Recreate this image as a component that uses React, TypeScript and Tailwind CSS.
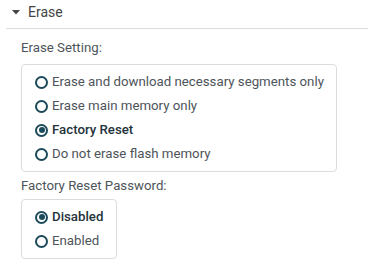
import React from 'react'

type Opt = { label: string; checked?: boolean }

function Radio({ label, checked }: Opt) {
    return (
        <div className="flex h-[24px] items-center gap-[4px] whitespace-nowrap">
            <span className="flex h-[13px] w-[13px] shrink-0 items-center justify-center rounded-full border-2 border-[#1b4a5a]">
                {checked && <span className="h-[6px] w-[6px] rounded-full bg-[#1b4a5a]" />}
            </span>
            <span className={checked ? 'font-medium text-[#24333b]' : 'text-[#4d5459]'}>{label}</span>
        </div>
    )
}

export default function App() {
    const erase: Opt[] = [
        { label: 'Erase and download necessary segments only' },
        { label: 'Erase main memory only' },
        { label: 'Factory Reset', checked: true },
        { label: 'Do not erase flash memory' },
    ]
    const pwd: Opt[] = [{ label: 'Disabled', checked: true }, { label: 'Enabled' }]

    return (
        <div className="h-[268px] w-[368px] bg-white text-[13.25px] text-[#4d5459]" style={{ fontFamily: 'Roboto, sans-serif' }}>
            <div className="ml-[6px] flex h-[29px] items-center gap-[8px] border-b border-[#dcdcdc] pl-[6px]">
                <svg width="8" height="6" viewBox="0 0 8 6" className="mt-[-4px]">
                    <path d="M0 1 L8 1 L4 5.5 Z" fill="#444" />
                </svg>
                <span className="mt-[-4px] text-[14px] text-[#444]">Erase</span>
            </div>
            <div className="pl-[21px]">
                <div className="mt-[11px] leading-[15px]">Erase Setting:</div>
                <div className="mt-[9px] w-[316px] rounded-[4px] border border-[#dcdcdc] px-[13px] py-[5px]">
                    {erase.map((o) => (
                        <Radio key={o.label} {...o} />
                    ))}
                </div>
                <div className="mt-[6px] leading-[15px]">Factory Reset Password:</div>
                <div className="mt-[6px] w-[96px] rounded-[4px] border border-[#dcdcdc] px-[13px] py-[5px]">
                    {pwd.map((o) => (
                        <Radio key={o.label} {...o} />
                    ))}
                </div>
            </div>
        </div>
    )
}
